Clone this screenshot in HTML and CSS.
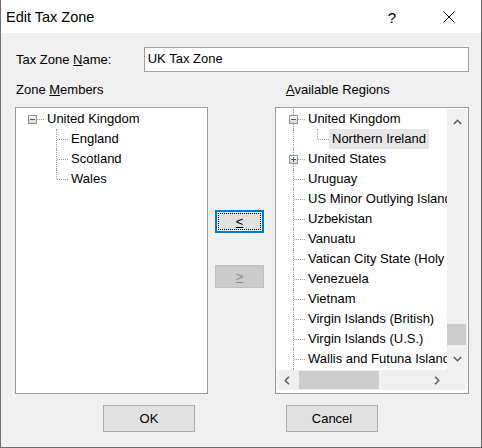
FILE: index.html
```html
<!DOCTYPE html>
<html>
<head>
<meta charset="utf-8">
<link rel="stylesheet" href="styles.css">
</head>
<body>
<div class="window">
  <div class="titlebar">
    <span class="title">Edit Tax Zone</span>
    <span class="help">?</span>
    <span class="close"><svg width="12" height="12" viewBox="0 0 12 12"><path d="M0.5 0.5 L11.5 11.5 M11.5 0.5 L0.5 11.5" stroke="#000" stroke-width="1" fill="none"/></svg></span>
  </div>
  <div class="content">
    <div class="name-row">
      <span class="name-label">Tax Zone <u>N</u>ame:</span>
      <div class="input">UK Tax Zone</div>
    </div>
    <div class="lists">
      <div class="col col-left">
        <div class="list-label">Zone <u>M</u>embers</div>
        <div class="box">
          <div class="tree tree-left">
            <div class="row"><span class="conn"><span class="exp minus"></span></span><span class="txt">United Kingdom</span></div>
            <div class="row"><span class="ind"></span><span class="conn v-full"></span><span class="txt">England</span></div>
            <div class="row"><span class="ind"></span><span class="conn v-full"></span><span class="txt">Scotland</span></div>
            <div class="row"><span class="ind"></span><span class="conn v-top"></span><span class="txt">Wales</span></div>
          </div>
        </div>
      </div>
      <div class="mid">
        <button class="btn btn-focus"><span class="focus-rect"><u>&lt;</u></span></button>
        <button class="btn btn-disabled"><u>&gt;</u></button>
      </div>
      <div class="col col-right">
        <div class="list-label list-label-right"><u>A</u>vailable Regions</div>
        <div class="box box-scroll">
          <div class="tree tree-right">
            <div class="row"><span class="conn v-full"><span class="exp minus"></span></span><span class="txt">United Kingdom</span></div>
            <div class="row"><span class="ind v"></span><span class="conn v-top"></span><span class="txt sel">Northern Ireland</span></div>
            <div class="row"><span class="conn v-full"><span class="exp plus"></span></span><span class="txt">United States</span></div>
            <div class="row"><span class="conn v-full"></span><span class="txt">Uruguay</span></div>
            <div class="row"><span class="conn v-full"></span><span class="txt">US Minor Outlying Islands</span></div>
            <div class="row"><span class="conn v-full"></span><span class="txt">Uzbekistan</span></div>
            <div class="row"><span class="conn v-full"></span><span class="txt">Vanuatu</span></div>
            <div class="row"><span class="conn v-full"></span><span class="txt">Vatican City State (Holy See)</span></div>
            <div class="row"><span class="conn v-full"></span><span class="txt">Venezuela</span></div>
            <div class="row"><span class="conn v-full"></span><span class="txt">Vietnam</span></div>
            <div class="row"><span class="conn v-full"></span><span class="txt">Virgin Islands (British)</span></div>
            <div class="row"><span class="conn v-full"></span><span class="txt">Virgin Islands (U.S.)</span></div>
            <div class="row"><span class="conn v-full"></span><span class="txt">Wallis and Futuna Islands</span></div>
            <div class="row"><span class="conn v-full"></span><span class="txt">Western Sahara</span></div>
          </div>
          <div class="vscroll">
            <div class="sb-btn"><svg width="9" height="6" viewBox="0 0 9 6"><path d="M0.8 5 L4.5 1.3 L8.2 5" stroke="#606060" stroke-width="1.6" fill="none"/></svg></div>
            <div class="sb-track-v"><div class="thumb-v"></div></div>
            <div class="sb-btn"><svg width="9" height="6" viewBox="0 0 9 6"><path d="M0.8 1 L4.5 4.7 L8.2 1" stroke="#606060" stroke-width="1.6" fill="none"/></svg></div>
          </div>
          <div class="hscroll">
            <div class="sb-btn-h"><svg width="6" height="9" viewBox="0 0 6 9"><path d="M5 0.8 L1.3 4.5 L5 8.2" stroke="#606060" stroke-width="1.6" fill="none"/></svg></div>
            <div class="sb-track-h"><div class="thumb-h"></div></div>
            <div class="sb-btn-h"><svg width="6" height="9" viewBox="0 0 6 9"><path d="M1 0.8 L4.7 4.5 L1 8.2" stroke="#606060" stroke-width="1.6" fill="none"/></svg></div>
          </div>
          <div class="corner"></div>
        </div>
      </div>
    </div>
    <div class="footer">
      <button class="btn-std">OK</button>
      <button class="btn-std btn-cancel">Cancel</button>
    </div>
  </div>
</div>
</body>
</html>
```
FILE: styles.css
```css
html, body {
  margin: 0;
  padding: 0;
  background: #f0f0f0;
}
body {
  font-family: "Liberation Sans", Arial, sans-serif;
  font-size: 13px;
  color: #000;
}
.window {
  width: 482px;
  height: 448px;
  box-sizing: border-box;
  border: 1px solid #6d6d6d;
  border-top: none;
  background: #f0f0f0;
  overflow: hidden;
}
.titlebar {
  height: 33px;
  background: #fff;
  display: flex;
  align-items: center;
  padding-left: 5px;
}
.title {
  flex: 1;
  font-size: 14.5px;
  padding-top: 1px;
}
.help {
  width: 20px;
  text-align: center;
  font-size: 15px;
  margin-right: 37px;
  padding-top: 1px;
}
.close {
  width: 20px;
  display: flex;
  justify-content: center;
  margin-right: 22px;
}
.content {
  padding: 14px 12px 0 14px;
}
.name-row {
  display: flex;
  align-items: center;
  height: 25px;
}
.name-label {
  width: 129px;
  padding-left: 1px;
  box-sizing: border-box;
}
.input {
  width: 326px;
  height: 25px;
  box-sizing: border-box;
  border: 1px solid #a0a0a0;
  background: #fff;
  padding-left: 3px;
  line-height: 22px;
}
.lists {
  display: flex;
}
.col-left { width: 193px; }
.col-right { width: 194px; }
.list-label {
  height: 35px;
  box-sizing: border-box;
  padding-top: 10px;
  line-height: 16px;
  padding-left: 1px;
}
.list-label-right { padding-left: 11px; }
.box {
  height: 287px;
  box-sizing: border-box;
  border: 1px solid #9a9a9a;
  background: #fff;
  padding: 1px;
}
.box-scroll {
  display: grid;
  grid-template-columns: 1fr 20px;
  grid-template-rows: 1fr 20px;
  padding: 1px 1px 3px 1px;
}
.tree {
  overflow: hidden;
}
.tree-left { padding: 0 0 0 3px; }
.tree-right {
  padding-left: 4px;
  background: #fff;
}
.row {
  display: flex;
  height: 20px;
  white-space: nowrap;
}
.conn, .ind {
  position: relative;
  flex: none;
  width: 24px;
  height: 20px;
}
.conn::after {
  content: "";
  position: absolute;
  left: 13px;
  right: 0;
  top: 10px;
  border-top: 1px dotted #a0a0a0;
}
.v-full::before, .ind.v::before {
  content: "";
  position: absolute;
  left: 12px;
  top: 0;
  bottom: 0;
  border-left: 1px dotted #a0a0a0;
}
.v-top::before {
  content: "";
  position: absolute;
  left: 12px;
  top: 0;
  height: 10px;
  border-left: 1px dotted #a0a0a0;
}
.exp {
  position: absolute;
  left: 8px;
  top: 6px;
  width: 9px;
  height: 9px;
  box-sizing: border-box;
  border: 1px solid #939393;
  background: linear-gradient(#ffffff, #d6d6d6);
  z-index: 1;
}
.exp::before {
  content: "";
  position: absolute;
  left: 1px;
  top: 3px;
  width: 5px;
  height: 1px;
  background: #3e5b8c;
}
.plus::after {
  content: "";
  position: absolute;
  left: 3px;
  top: 1px;
  width: 1px;
  height: 5px;
  background: #3e5b8c;
}
.txt {
  padding: 0 3px;
  line-height: 20px;
  height: 20px;
}
.sel {
  background: #e6e6e6;
}
.vscroll {
  background: #f0f0f0;
  display: flex;
  flex-direction: column;
}
.sb-btn {
  height: 25px;
  display: flex;
  align-items: center;
  justify-content: center;
}
.sb-btn:last-child { height: 22px; }
.sb-track-v {
  flex: 1;
  display: flex;
  flex-direction: column;
  justify-content: flex-end;
  padding-bottom: 3px;
}
.thumb-v {
  height: 21px;
  margin: 0 1px 0 0;
  background: #cdcdcd;
}
.hscroll {
  background: #f0f0f0;
  display: flex;
}
.sb-btn-h {
  width: 20px;
  display: flex;
  align-items: center;
  justify-content: center;
}
.sb-track-h {
  flex: 1;
  display: flex;
  padding-left: 2px;
}
.thumb-h {
  width: 80px;
  margin: 1px 0;
  background: #cdcdcd;
}
.corner {
  background: #f0f0f0;
}
.mid {
  width: 67px;
  box-sizing: border-box;
  padding: 138px 0 0 7px;
  display: flex;
  flex-direction: column;
}
.btn {
  width: 49px;
  height: 23px;
  box-sizing: border-box;
  font-family: "Liberation Sans", Arial, sans-serif;
  font-size: 13px;
  padding: 0;
  display: flex;
  align-items: center;
  justify-content: center;
}
.btn-focus {
  border: 2px solid #0078d7;
  background: #e5f1fb;
  color: #000;
  padding: 1px;
}
.focus-rect {
  flex: 1;
  align-self: stretch;
  border: 1px dotted #000;
  display: flex;
  align-items: center;
  justify-content: center;
  background: #e1e1e1;
}
.btn-disabled {
  margin-top: 32px;
  border: 1px solid #bfbfbf;
  background: #cccccc;
  color: #8a8a8a;
}
.footer {
  margin-top: 11px;
  padding-left: 88px;
  display: flex;
}
.btn-std {
  width: 92px;
  height: 27px;
  box-sizing: border-box;
  border: 1px solid #adadad;
  background: #e1e1e1;
  font-family: "Liberation Sans", Arial, sans-serif;
  font-size: 13px;
  color: #000;
  padding: 0;
}
.btn-cancel {
  margin-left: 91px;
}
```
